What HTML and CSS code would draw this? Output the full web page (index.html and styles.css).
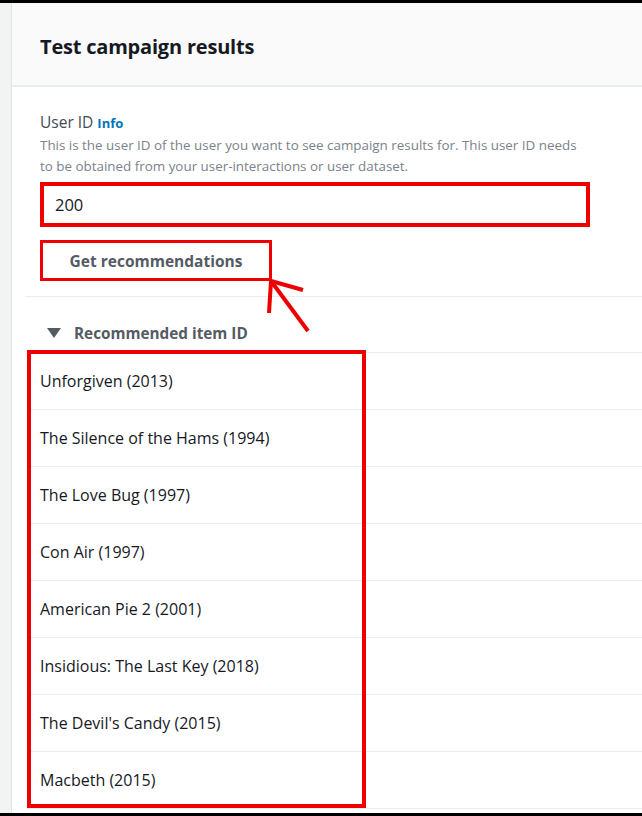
FILE: index.html
```html
<!DOCTYPE html>
<html>
<head>
<meta charset="utf-8">
<link rel="stylesheet" href="styles.css">
</head>
<body>
<div class="app">
  <div class="side"></div>
  <div class="panel">
    <div class="header"><h1 class="title">Test campaign results</h1></div>
    <div class="form">
      <div class="label">User ID <span class="info">Info</span></div>
      <div class="desc">This is the user ID of the user you want to see campaign results for. This user ID needs to be obtained from your user-interactions or user dataset.</div>
      <div class="input">200</div>
      <div class="btn">Get recommendations</div>
    </div>
    <div class="divider"></div>
    <div class="sechead"><span class="tri"></span>Recommended item ID</div>
    <div class="list">
      <div class="row">Unforgiven (2013)</div>
      <div class="row">The Silence of the Hams (1994)</div>
      <div class="row">The Love Bug (1997)</div>
      <div class="row">Con Air (1997)</div>
      <div class="row">American Pie 2 (2001)</div>
      <div class="row">Insidious: The Last Key (2018)</div>
      <div class="row">The Devil's Candy (2015)</div>
      <div class="row">Macbeth (2015)</div>
      <div class="mark"></div>
    </div>
  </div>
</div>
<svg class="arrow" width="642" height="816" viewBox="0 0 642 816">
  <g stroke="#ee0000" stroke-width="4" stroke-linecap="butt">
    <line x1="271" y1="281" x2="303" y2="290"/>
    <line x1="271" y1="281" x2="269" y2="313"/>
    <line x1="271" y1="281" x2="308" y2="331"/>
  </g>
</svg>
</body>
</html>
```
FILE: styles.css
```css
html, body { margin: 0; padding: 0; }
body {
  background: #000;
  width: 642px;
  height: 816px;
  overflow: hidden;
  position: relative;
  font-family: "Open Sans", "Liberation Sans", sans-serif;
  color: #16191f;
}
.app {
  margin-top: 3px;
  height: 810px;
  display: flex;
  background: #fff;
  overflow: hidden;
}
.side {
  width: 11px;
  background: #f2f3f3;
  border-right: 1px solid #e1e4e4;
  flex: none;
}
.panel { flex: 1; display: flex; flex-direction: column; }
.header {
  background: #fafafa;
  border-bottom: 2px solid #eaeded;
  display: flex;
  align-items: center;
  padding: 4px 0 0 28px;
  box-sizing: border-box;
  height: 84px;
}
.title {
  margin: 0;
  font-size: 20px;
  font-weight: 700;
  color: #16191f;
  letter-spacing: -0.2px;
}
.form { padding: 25px 52px 0 28px; }
.label { font-size: 15.5px; line-height: 20px; color: #444b54; }
.info { color: #0073bb; font-weight: 700; font-size: 13px; }
.desc { margin-top: 2px; font-size: 13.4px; line-height: 21px; color: #7a828c; }
.input {
  margin-top: 5px;
  height: 45px;
  box-sizing: border-box;
  border: 4px solid #ee0000;
  padding-left: 11px;
  display: flex;
  align-items: center;
  font-size: 16.5px;
  color: #16191f;
}
.btn {
  margin-top: 13px;
  width: 232px;
  height: 41px;
  box-sizing: border-box;
  border: 3px solid #ee0000;
  display: flex;
  align-items: center;
  justify-content: center;
  font-size: 15.5px;
  font-weight: 700;
  color: #545b64;
}
.divider { margin: 15px 0 0 13px; height: 1px; background: #eaeded; }
.sechead {
  padding: 26px 0 7px 35px;
  display: flex;
  align-items: center;
  font-size: 15.3px;
  line-height: 20px;
  font-weight: 700;
  color: #545b64;
}
.tri {
  width: 0; height: 0;
  border-left: 7.5px solid transparent;
  border-right: 7.5px solid transparent;
  border-top: 10px solid #545b64;
  margin-right: 13px;
}
.list { position: relative; margin-left: 15px; margin-top: 2px; border-bottom: 1px solid #eaeded; }
.row {
  height: 56px;
  border-top: 1px solid #eaeded;
  padding-left: 13px;
  display: flex;
  align-items: center;
  font-size: 16px;
}
.mark {
  position: absolute;
  left: 0; top: -2px;
  width: 339px; height: 458px;
  box-sizing: border-box;
  border: 4px solid #ee0000;
}
.arrow { position: absolute; left: 0; top: 0; pointer-events: none; }
```
